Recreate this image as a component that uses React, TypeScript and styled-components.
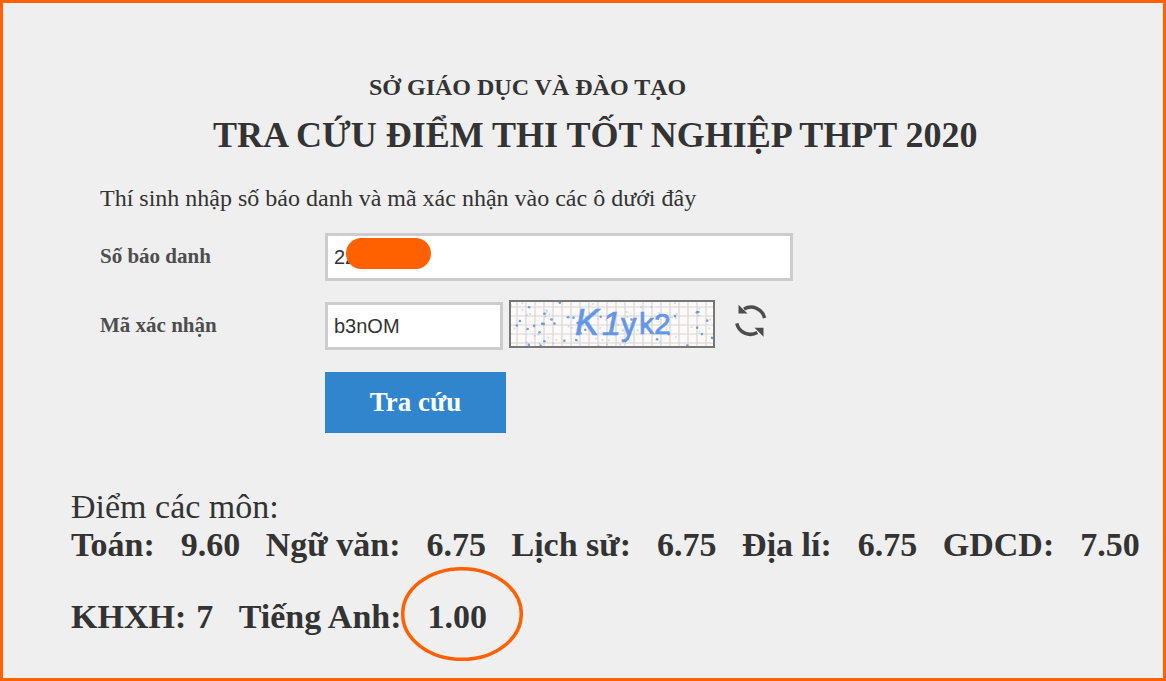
import React from 'react';
import styled, { createGlobalStyle } from 'styled-components';

const GlobalStyle = createGlobalStyle`
  html, body {
    margin: 0;
    padding: 0;
    background: #efefef;
  }
  * {
    box-sizing: border-box;
  }
`;

const noise = (n: number) => {
  const v = Math.sin(n * 12.9898) * 43758.5453;
  return v - Math.floor(v);
};

// seeded noise so the captcha looks the same on every load
const captchaDots = Array.from({ length: 110 }, (_, i) => ({
  x: noise(i + 1) * 202,
  y: noise(i + 200) * 44,
  r: i % 3 === 0 ? 1.3 : 1,
  o: i % 3 === 0 ? 0.9 : 0.3,
}));

const App: React.FC = () => {
  return (
    <Page>
      <GlobalStyle />
      <Department>SỞ GIÁO DỤC VÀ ĐÀO TẠO</Department>
      <Title>TRA CỨU ĐIỂM THI TỐT NGHIỆP THPT 2020</Title>

      <Form>
        <Intro>Thí sinh nhập số báo danh và mã xác nhận vào các ô dưới đây</Intro>

        <FormRow $height={48}>
          <Label>Số báo danh</Label>
          <InputWrap>
            <TextInput $width={468} readOnly value="22" />
            <Redaction />
          </InputWrap>
        </FormRow>

        <FormRow $height={48} $top={21}>
          <Label>Mã xác nhận</Label>
          <TextInput $width={178} readOnly value="b3nOM" />
          <Captcha>
            <svg width="202" height="44" viewBox="0 0 202 44">
              {Array.from({ length: 23 }, (_, i) => (
                <line key={i} x1={i * 9 + 6} y1="0" x2={i * 9 + 6} y2="44" stroke="#d8d6d6" strokeWidth="1.2" />
              ))}
              {Array.from({ length: 5 }, (_, i) => (
                <line key={i} x1="0" y1={i * 9 + 5} x2="202" y2={i * 9 + 5} stroke="#d8d6d6" strokeWidth="1.2" />
              ))}
              {captchaDots.map((d, i) => (
                <circle key={i} cx={d.x} cy={d.y} r={d.r} fill="#5f93e8" opacity={d.o} />
              ))}
              <CaptchaText x="64" y="33" fontSize="36" fontStyle="italic">K</CaptchaText>
              <CaptchaText x="91" y="33" fontSize="34" fontStyle="italic">1</CaptchaText>
              <CaptchaText x="110" y="33" fontSize="31">y</CaptchaText>
              <CaptchaText x="128" y="32" fontSize="30">k2</CaptchaText>
            </svg>
          </Captcha>
          <RefreshButton>
            <svg width="34" height="34" viewBox="0 0 34 34" fill="none">
              <path d="M10 5 A14 14 0 0 1 30.6 14" stroke="#4d4d4d" strokeWidth="3.5" />
              <path d="M23.3 28.5 A14 14 0 0 1 2.8 19.3" stroke="#4d4d4d" strokeWidth="3.5" />
              <path d="M4.5 0.8 V9.5 H13.5 Z" fill="#4d4d4d" />
              <path d="M29.5 32.8 V23.8 H20.5 Z" fill="#4d4d4d" />
            </svg>
          </RefreshButton>
        </FormRow>

        <SubmitRow>
          <SubmitButton>Tra cứu</SubmitButton>
        </SubmitRow>
      </Form>

      <Scores>
        <ScoresHeading>Điểm các môn:</ScoresHeading>
        <ScoreLine>
          <ScorePair $label="Toán:" $value="9.60" />
          <ScorePair $label="Ngữ văn:" $value="6.75" />
          <ScorePair $label="Lịch sử:" $value="6.75" />
          <ScorePair $label="Địa lí:" $value="6.75" />
          <ScorePair $label="GDCD:" $value="7.50" />
        </ScoreLine>
        <ScoreLine $top={32}>
          <Pair $gap={10}>
            <span>KHXH:</span>
            <span>7</span>
          </Pair>
          <CircledPair>
            <ScorePair $label="Tiếng Anh:" $value="1.00" />
            <Circle>
              <svg width="126" height="98" viewBox="0 0 126 98" fill="none">
                <ellipse cx="63" cy="49" rx="59.3" ry="45.3" stroke="#ff6000" strokeWidth="3.5" />
              </svg>
            </Circle>
          </CircledPair>
        </ScoreLine>
      </Scores>
    </Page>
  );
};

const ScorePair: React.FC<{ $label: string; $value: string }> = ({ $label, $value }) => (
  <Pair $gap={26}>
    <span>{$label}</span>
    <span>{$value}</span>
  </Pair>
);

const Page = styled.div`
  width: 1166px;
  height: 681px;
  border: 3px solid #ff6000;
  background: #efefef;
  color: #333;
  font-family: 'Liberation Serif', 'Times New Roman', serif;
  overflow: hidden;
  padding-top: 70px;
`;

const Department = styled.h3`
  margin: 0 0 0 366px;
  font-size: 24px;
  line-height: 28px;
  font-weight: bold;
`;

const Title = styled.h1`
  margin: 11px 0 0 210px;
  font-size: 36px;
  line-height: 46px;
  font-weight: bold;
  white-space: nowrap;
`;

const Form = styled.div`
  margin: 25px 0 0 97px;
`;

const Intro = styled.p`
  margin: 0;
  font-size: 24px;
  line-height: 30px;
`;

const FormRow = styled.div<{ $height: number; $top?: number }>`
  display: flex;
  align-items: center;
  height: ${(p) => p.$height}px;
  margin-top: ${(p) => p.$top ?? 20}px;
`;

const Label = styled.label`
  width: 225px;
  flex-shrink: 0;
  padding-bottom: 2px;
  font-size: 21px;
  font-weight: bold;
  color: #4d4d4d;
`;

const InputWrap = styled.div`
  position: relative;
  display: flex;
`;

const TextInput = styled.input<{ $width: number }>`
  width: ${(p) => p.$width}px;
  height: 48px;
  border: 3px solid #ccc;
  border-radius: 0;
  background: #fff;
  padding: 0 6px;
  outline: none;
  color: #333;
  font-family: 'Liberation Sans', Arial, sans-serif;
  font-size: 20px;
`;

const Redaction = styled.div`
  position: absolute;
  left: 21px;
  top: 5px;
  width: 85px;
  height: 31px;
  border-radius: 16px;
  background: #ff6000;
`;

const Captcha = styled.div`
  width: 206px;
  height: 48px;
  margin: -4px 0 0 6px;
  border: 2px solid #777;
  background: #fdf9f9;
  line-height: 0;
`;

const CaptchaText = styled.text`
  fill: #6496e8;
  stroke: #6496e8;
  stroke-width: 0.7;
  font-family: 'Liberation Sans', Arial, sans-serif;
`;

const RefreshButton = styled.div`
  margin: -10px 0 0 19px;
  line-height: 0;
`;

const SubmitRow = styled.div`
  margin: 22px 0 0 225px;
`;

const SubmitButton = styled.button`
  display: block;
  width: 181px;
  height: 61px;
  border: none;
  background: #3085cd;
  color: #fff;
  font-family: 'Liberation Serif', 'Times New Roman', serif;
  font-size: 27px;
  font-weight: bold;
`;

const Scores = styled.div`
  margin: 56px 0 0 68px;
`;

const ScoresHeading = styled.div`
  font-size: 34px;
  line-height: 36px;
`;

const ScoreLine = styled.div<{ $top?: number }>`
  display: flex;
  gap: 25.5px;
  margin-top: ${(p) => p.$top ?? 0}px;
  font-size: 34px;
  line-height: 40px;
  font-weight: bold;
  white-space: nowrap;
`;

const Pair = styled.div<{ $gap: number }>`
  display: flex;
  gap: ${(p) => p.$gap}px;
`;

const CircledPair = styled.div`
  position: relative;
`;

const Circle = styled.div`
  position: absolute;
  left: 160px;
  top: -32px;
  line-height: 0;
`;

export default App;
